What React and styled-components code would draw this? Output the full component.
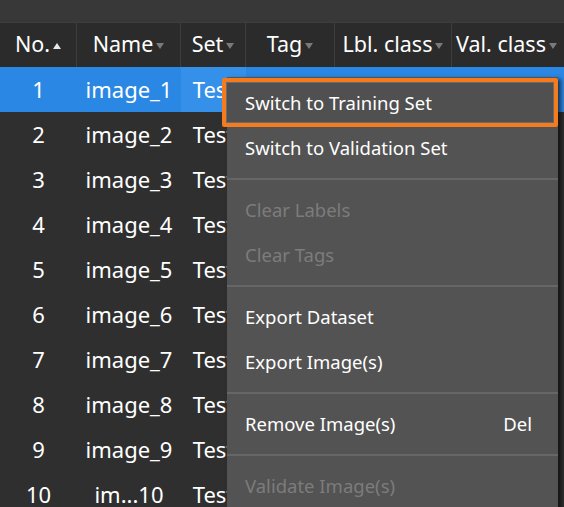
import React from "react";
import styled, { createGlobalStyle } from "styled-components";

const Global = createGlobalStyle`
  html, body {
    margin: 0;
    padding: 0;
    background: #2f2f2f;
  }
  body {
    font-family: "Noto Sans", "Open Sans", sans-serif;
  }
`;

const cols = "77px 104px 65px 89px 117px 1fr";

const Screen = styled.div`
  position: relative;
  width: 564px;
  height: 507px;
  overflow: hidden;
  background: #2f2f2f;
  display: flex;
  flex-direction: column;
`;

const TopBar = styled.div`
  height: 22px;
  background: #383838;
  flex-shrink: 0;
`;

const HeaderRow = styled.div`
  display: grid;
  grid-template-columns: ${cols};
  height: 44px;
  background: #2b2b2b;
  border-top: 1px solid #3e3e3e;
  flex-shrink: 0;
`;

const HeadCell = styled.div`
  display: flex;
  align-items: center;
  justify-content: center;
  gap: 3px;
  color: #ffffff;
  font-size: 21.5px;
  padding-bottom: 3px;
  border-right: 1px solid #3e3e3e;
  white-space: nowrap;
  overflow: hidden;
  &:last-child {
    border-right: none;
    justify-content: flex-start;
    padding-left: 4px;
  }
`;

const Arrow = styled.span`
  width: 0;
  height: 0;
  flex-shrink: 0;
  border-left: 4px solid transparent;
  border-right: 4px solid transparent;
  ${(p) =>
    p.$up
      ? "border-bottom: 6px solid #e8e8e8;"
      : "border-top: 6px solid #7a7a7a;"}
  margin-top: 4px;
`;

const Row = styled.div`
  display: grid;
  grid-template-columns: ${cols};
  height: 45px;
  background: ${(p) => (p.$selected ? "#2b87e4" : "transparent")};
  flex-shrink: 0;
`;

const Cell = styled.div`
  display: flex;
  align-items: center;
  justify-content: center;
  color: #ffffff;
  font-size: 22px;
  white-space: nowrap;
  overflow: hidden;
  padding-bottom: 2px;
  background: ${(p) => (p.$hover ? "#3590ea" : "transparent")};
`;

const Menu = styled.div`
  position: absolute;
  left: 227px;
  top: 77px;
  width: 331px;
  height: 428px;
  background: #535353;
  box-shadow: 3px 2px 4px rgba(0, 0, 0, 0.6);
  padding-top: 3px;
  display: flex;
  flex-direction: column;
`;

const Item = styled.div`
  position: relative;
  height: 45px;
  display: flex;
  align-items: center;
  justify-content: space-between;
  padding: 0 26px 0 18px;
  font-size: 18.5px;
  color: ${(p) => (p.$disabled ? "#7c7c7c" : "#ffffff")};
  flex-shrink: 0;
  ${(p) =>
    p.$focused &&
    `
    background: #505050;
    &::after {
      content: "";
      position: absolute;
      left: -5px;
      right: 0;
      top: -2px;
      bottom: -2px;
      border: 4px solid #f47b1e;
      border-radius: 2px;
      box-shadow: inset 0 0 0 1px #6a6a6a;
    }
  `}
`;

const Separator = styled.div`
  height: 17px;
  display: flex;
  align-items: center;
  flex-shrink: 0;
  &::before {
    content: "";
    flex: 1;
    height: 2px;
    background: #666666;
  }
`;

const rows = Array.from({ length: 10 }, (_, i) => ({
  no: i + 1,
  name: i === 9 ? "im...10" : `image_${i + 1}`,
  set: "Test",
}));

const headers = [
  { label: "No.", up: true },
  { label: "Name" },
  { label: "Set" },
  { label: "Tag" },
  { label: "Lbl. class" },
  { label: "Val. class" },
];

export default function App() {
  return (
    <>
      <Global />
      <Screen>
        <TopBar />
        <HeaderRow>
          {headers.map((h) => (
            <HeadCell key={h.label}>
              {h.label}
              <Arrow $up={h.up} />
            </HeadCell>
          ))}
        </HeaderRow>
        {rows.map((r, i) => (
          <Row key={r.no} $selected={i === 0}>
            <Cell>{r.no}</Cell>
            <Cell>{r.name}</Cell>
            <Cell $hover={i === 0}>{r.set}</Cell>
            <Cell />
            <Cell />
            <Cell />
          </Row>
        ))}
        <Menu>
          <Item $focused>Switch to Training Set</Item>
          <Item>Switch to Validation Set</Item>
          <Separator />
          <Item $disabled>Clear Labels</Item>
          <Item $disabled>Clear Tags</Item>
          <Separator />
          <Item>Export Dataset</Item>
          <Item>Export Image(s)</Item>
          <Separator />
          <Item>
            <span>Remove Image(s)</span>
            <span>Del</span>
          </Item>
          <Separator />
          <Item $disabled>Validate Image(s)</Item>
        </Menu>
      </Screen>
    </>
  );
}
